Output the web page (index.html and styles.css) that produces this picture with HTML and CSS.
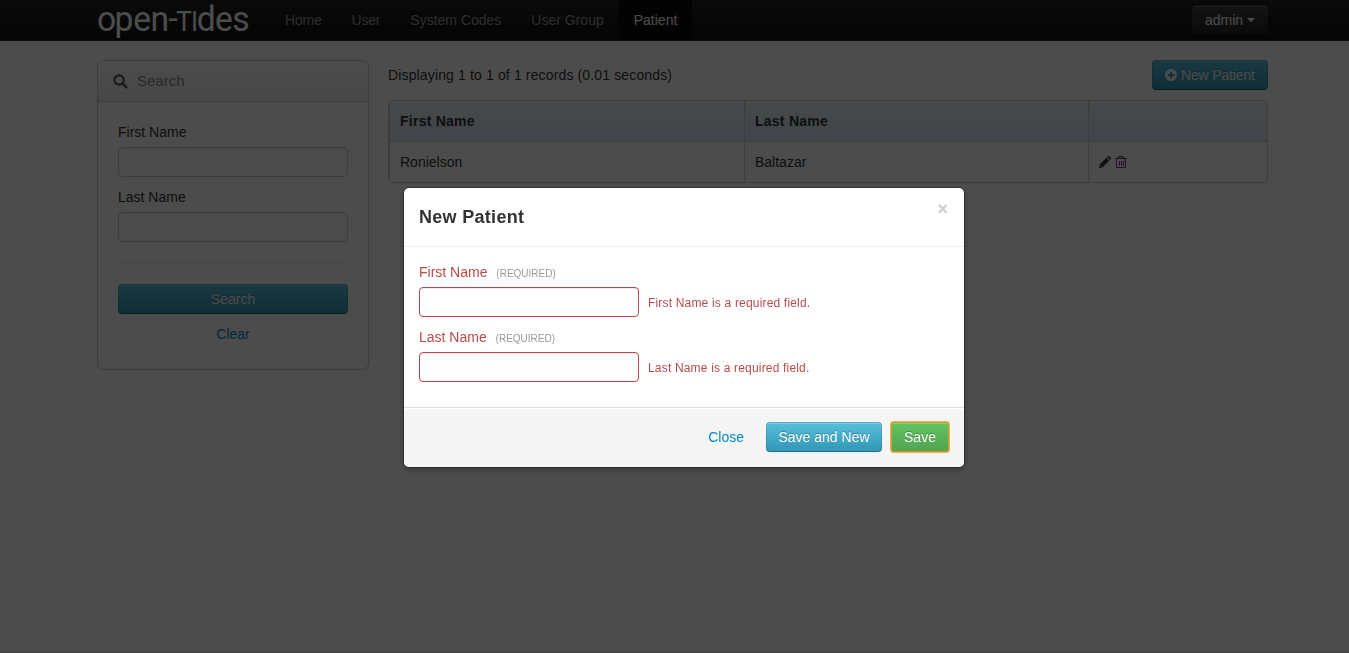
FILE: index.html
```html
<!DOCTYPE html>
<html lang="en">
<head>
<meta charset="utf-8">
<title>Open-Tides - Patient</title>
<link rel="stylesheet" href="styles.css">
</head>
<body>
<header class="navbar">
  <a class="brand" href="#" aria-label="open-tides">
    <svg width="153" height="40" viewBox="0 0 153 40"><g transform="scale(.96 1)"><text class="brand-text" y="31" x="0 18.3 37.8 55.7">open</text><text class="brand-text" x="74.5" y="30">-</text><text class="brand-caps" y="31" x="82.5 98">TI</text><text class="brand-text" y="31" x="104 123 141">des</text></g></svg>
  </a>
  <nav class="nav">
    <a href="#" class="tight">Home</a>
    <a href="#" class="tight">User</a>
    <a href="#">System Codes</a>
    <a href="#">User Group</a>
    <a href="#" class="active">Patient</a>
  </nav>
  <button class="btn btn-inverse">admin <span class="caret"></span></button>
</header>

<main class="container">
  <aside class="search-box">
    <h4 class="search-title">
      <svg width="15" height="15" viewBox="0 0 15 15"><circle cx="6" cy="6" r="4.7" fill="none" stroke="#555" stroke-width="2.2"/><path d="M9.6 9.6L13.3 13.3" stroke="#555" stroke-width="2.5" stroke-linecap="round"/></svg>
      Search
    </h4>
    <form class="search-form">
      <label>First Name</label>
      <input type="text">
      <label>Last Name</label>
      <input type="text">
      <hr>
      <button type="button" class="btn btn-info btn-block">Search</button>
      <a class="clear" href="#">Clear</a>
    </form>
  </aside>
  <section class="results">
    <div class="results-bar">
      <span class="summary">Displaying 1 to 1 of 1 records (0.01 seconds)</span>
      <button class="btn btn-info">
        <svg class="plus" width="12" height="12" viewBox="0 0 12 12"><circle cx="6" cy="6" r="6" fill="#fff"/><path d="M6 2.8V9.2M2.8 6H9.2" stroke="#3a9ebd" stroke-width="2"/></svg>
        New Patient</button>
    </div>
    <table class="table">
      <thead><tr><th class="col-first">First Name</th><th class="col-last">Last Name</th><th></th></tr></thead>
      <tbody><tr>
        <td>Ronielson</td><td>Baltazar</td>
        <td><div class="actions">
          <svg width="12" height="12" viewBox="0 0 12 12"><path d="M0 12L.8 8.3L7.3 1.8L10.2 4.7L3.7 11.2Z M8.1 1L9 .2Q9.6-.2 10.2.3L11.7 1.8Q12.2 2.4 11.8 3L11 3.9Z" fill="#333"/><path d="M1.6 9.1L2.9 10.4" stroke="#fff" stroke-width=".8"/></svg>
          <svg width="12" height="12" viewBox="0 0 12 12"><path d="M.5 2.5H11.5M3.5 2V.6H8.5V2" fill="none" stroke="#333"/><path d="M1.5 3V11.5H10.5V3M4.5 5V10M6.5 5V10M8.5 5V10" fill="none" stroke="#72207c" stroke-width=".9"/></svg>
        </div></td>
      </tr></tbody>
    </table>
  </section>
</main>
<footer class="footer"></footer>

<div class="backdrop">
  <div class="modal" role="dialog">
    <div class="modal-header"><h3>New Patient</h3><button class="close">×</button></div>
    <form class="modal-body">
      <label>First Name <small>(REQUIRED)</small></label>
      <div class="field"><input type="text"><span class="help">First Name is a required field.</span></div>
      <label>Last Name <small>(REQUIRED)</small></label>
      <div class="field"><input type="text"><span class="help">Last Name is a required field.</span></div>
    </form>
    <div class="modal-footer">
      <a class="close-link" href="#">Close</a>
      <button class="btn btn-info">Save and New</button>
      <button class="btn btn-success focused">Save</button>
    </div>
  </div>
</div>
</body>
</html>
```

FILE: styles.css
```css
* { box-sizing: border-box; }
body {
  margin: 0;
  height: 653px;
  overflow: hidden;
  display: flex;
  flex-direction: column;
  background: #fff;
  color: #333;
  font: 14px/20px "Liberation Sans", Arial, sans-serif;
}
a { color: #08c; text-decoration: none; }

.navbar {
  display: flex;
  flex: none;
  height: 41px;
  padding: 0 81px 0 97px;
  background: linear-gradient(#222, #111);
  border-bottom: 1px solid #252525;
  box-shadow: 0 1px 10px rgba(0, 0, 0, .1);
}
.brand { width: 173px; height: 40px; }
.brand svg { display: block; overflow: visible; }
.brand-text { font: 35px Roboto, sans-serif; fill: #fff; }
.brand-caps { font: 27px Roboto, sans-serif; fill: #fff; }
.nav { display: flex; flex: 1; }
.nav a { padding: 10px 15px; color: #999; text-shadow: 0 -1px 0 rgba(0, 0, 0, .25); }
.nav .tight { letter-spacing: -.2px; }
.nav .active { color: #fff; background: #0c0c0c; box-shadow: inset 0 3px 8px rgba(0, 0, 0, .125); }

.btn {
  height: 30px;
  padding: 4px 12px;
  border: 1px solid;
  border-radius: 4px;
  color: #fff;
  font: inherit;
  white-space: nowrap;
  text-shadow: 0 -1px 0 rgba(0, 0, 0, .25);
  box-shadow: inset 0 1px 0 rgba(255, 255, 255, .2), 0 1px 2px rgba(0, 0, 0, .05);
}
.btn-info { background: linear-gradient(#5bc0de, #2f96b4) border-box; border-color: rgba(0, 0, 0, .1) rgba(0, 0, 0, .1) rgba(0, 0, 0, .25); }
.btn-success { background: linear-gradient(#62c462, #51a351) border-box; border-color: rgba(0, 0, 0, .1) rgba(0, 0, 0, .1) rgba(0, 0, 0, .25); }
.btn-inverse { width: 76px; margin-top: 5px; background: linear-gradient(#444, #222) border-box; border-color: rgba(0, 0, 0, .1) rgba(0, 0, 0, .1) rgba(0, 0, 0, .25); }
.btn-block { width: 100%; }
.caret { display: inline-block; vertical-align: 3px; border: 4px solid transparent; border-top-color: #fff; border-bottom: 0; }
.plus { vertical-align: -1px; }

.container { display: flex; flex: 1; align-items: flex-start; gap: 19px; padding: 19px 81px 0 97px; }
.search-box { width: 272px; height: 310px; border: 1px solid #ccc; border-radius: 6px; overflow: hidden; }
.search-title {
  display: flex;
  align-items: center;
  gap: 9px;
  height: 41px;
  margin: 0;
  padding-left: 15px;
  border-bottom: 1px solid #ccc;
  background: linear-gradient(#fff, #eee);
  color: #888;
  font-size: 15px;
  font-weight: normal;
}
.search-form { padding: 20px; }
label { display: block; margin-bottom: 5px; }
input {
  display: block;
  width: 100%;
  height: 30px;
  margin: 0 0 10px;
  border: 1px solid #ccc;
  border-radius: 4px;
  background: #fff;
  box-shadow: inset 0 1px 1px rgba(0, 0, 0, .075);
}
hr { margin: 20px 0; border: 0; border-top: 1px solid #eee; border-bottom: 1px solid #fff; }
.clear { display: block; margin-top: 10px; text-align: center; }

.results { flex: 1; }
.results-bar { display: flex; justify-content: space-between; margin-bottom: 10px; }
.results-bar .btn { width: 116px; padding: 4px 0; letter-spacing: -.15px; }
.summary { padding-top: 5px; letter-spacing: .14px; }
.table { width: 100%; table-layout: fixed; border: 1px solid #ccc; border-radius: 5px; border-spacing: 0; overflow: hidden; }
th, td { padding: 10px; border-left: 1px solid #ccc; text-align: left; }
th { height: 40px; background: linear-gradient(#eef5f8, #dbe5f3); letter-spacing: .25px; }
td { height: 41px; border-top: 1px solid #ccc; }
.col-first { width: 355px; }
.col-last { width: 344px; }
.actions { display: flex; gap: 4px; }
.footer { flex: none; height: 2px; border-top: 1px solid #ddd; background: #f5f5f5; }

.backdrop {
  position: fixed;
  inset: 0 -19px 0 0;
  display: flex;
  justify-content: center;
  align-items: flex-start;
  padding-top: 188px;
  background: rgba(0, 0, 0, .7);
}
.modal { width: 560px; border-radius: 5px; background: #fff; box-shadow: 0 0 0 1px rgba(0, 0, 0, .3), 0 3px 7px rgba(0, 0, 0, .3); }
.modal-header { display: flex; justify-content: space-between; height: 59px; padding: 14px 15px; border-bottom: 1px solid #eee; }
.modal-header h3 { margin: 0; font-size: 18px; line-height: 30px; letter-spacing: .3px; }
.close { align-self: flex-start; margin-top: -3px; padding: 0 1px; border: 0; background: none; color: #ccc; font: bold 18px/20px "Liberation Sans", Arial, sans-serif; }
.modal-body { padding: 15px; color: #b94a48; }
.modal-body small { margin-left: 5px; color: #999; font-size: 10px; line-height: 1; }
.field { display: flex; gap: 9px; }
.field input { width: 220px; border-color: #b94a48; }
.help { padding-top: 6px; font-size: 12px; letter-spacing: .18px; }
.modal-footer {
  display: flex;
  justify-content: flex-end;
  height: 60px;
  padding: 14px 15px 15px;
  border-top: 1px solid #ddd;
  border-radius: 0 0 5px 5px;
  background: #f5f5f5;
  box-shadow: inset 0 1px 0 #fff;
}
.close-link { padding: 5px 22px 5px 0; }
.modal-footer .btn-info { width: 116px; margin-right: 9px; padding: 4px 0; }
.focused { width: 58px; padding: 4px 0; border-radius: 3px; outline: 2px solid rgba(229, 160, 40, .8); outline-offset: -1px; }
```
